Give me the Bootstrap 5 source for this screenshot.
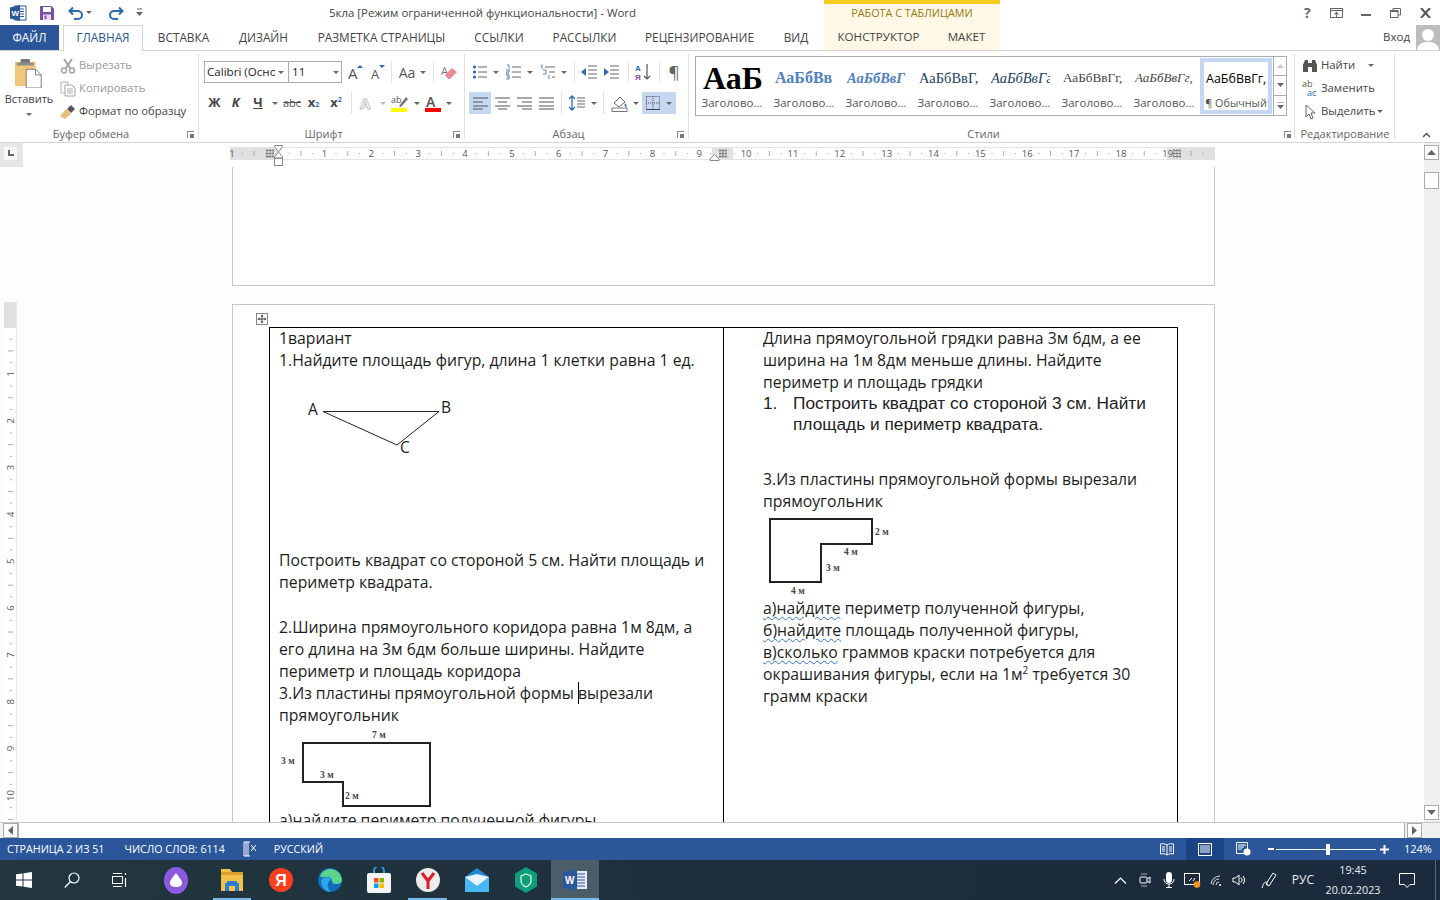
<!DOCTYPE html>
<html lang="ru">
  <head>
    <meta charset="UTF-8" />
    <meta name="viewport" content="width=device-width, initial-scale=1.0" />
    <title>5кла - Word</title>
    <link href="https://cdn.jsdelivr.net/npm/bootstrap@5.3.3/dist/css/bootstrap.min.css" rel="stylesheet" />
    <style>
      body { font-family: "Open Sans", "Noto Sans", sans-serif; font-size: 12px; color: #444; background: #fff; height: 900px; overflow: hidden; }
      svg { display: block; flex: none; }
      .ml1 { margin-left: 1px; } .ml2 { margin-left: 2px; } .ml3 { margin-left: 3px; } .ml4 { margin-left: 4px; }
      .ml5 { margin-left: 5px; } .ml6 { margin-left: 6px; } .ml12 { margin-left: 12px; } .ml13 { margin-left: 13px; } .ml14 { margin-left: 14px; }
      .mr3 { margin-right: 3px; } .mr4 { margin-right: 4px; } .mr5 { margin-right: 5px; }

      /* title bar + tabs */
      .ttl-bar { height: 25px; }
      .qat { width: 329px; padding-left: 10px; }
      .qat .cr { width: 10px; }
      .ttl-text { width: 495px; padding-top: 1px; color: #444; font-size: 11.45px; }
      .ctx-head { width: 176px; height: 25px; background: #fff8e6; border-top: 4px solid #f6cb1e; color: #97780f; font-size: 10.8px; text-align: center; line-height: 18px; }
      .win-ctl { width: 29.5px; display: flex; justify-content: center; }
      .win-help { font-size: 14px; color: #666; font-weight: 700; }
      .tab-row { height: 25px; }
      .tab-item { height: 25px; line-height: 24px; text-align: center; color: #444; font-size: 11.8px; text-decoration: none; flex: none; white-space: nowrap; }
      .tab-file { width: 59px; margin-right: 4px; background: #2b579a; color: #fff; }
      .tab-home { width: 80px; color: #2b579a; background: #fff; border: 1px solid #d4d4d4; border-bottom: 0; height: 26px; line-height: 23px; position: relative; z-index: 2; }
      .w-81 { width: 81px; } .w-79 { width: 79px; } .w-157 { width: 157px; } .w-78 { width: 78px; }
      .w-93 { width: 93px; } .w-137 { width: 137px; } .w-56 { width: 56px; }
      .tab-ctx { background: #fff8e6; font-size: 11.6px; }
      .w-109 { width: 109px; } .w-67 { width: 67px; }
      .login-txt { margin: -2px 6px 0 auto; color: #444; font-size: 11.5px; }
      .avatar { width: 24px; height: 25px; background: #bdbdbd; overflow: hidden; }

      /* ribbon */
      .rb { height: 93px; border-top: 1px solid #d4d4d4; border-bottom: 1px solid #d4d4d4; }
      .rb-grp { position: relative; flex: none; height: 91px; display: flex; flex-direction: column; }
      .rb-grp::after { content: ""; position: absolute; right: 0; top: 3px; bottom: 3px; width: 1px; background: #e1e1e1; }
      .rb-body { flex: 1; min-height: 0; }
      .rb-lbl { height: 16px; text-align: center; color: #666; font-size: 11px; line-height: 15px; padding-right: 17px; }
      .rb-lbl-full { padding-right: 0; }
      .launch { position: absolute; right: 5px; bottom: 4px; width: 7px; height: 7px; border: 1px solid #888; border-width: 1px 0 0 1px; }
      .launch::after { content: ""; position: absolute; right: 0; bottom: 0; width: 4px; height: 4px; background: #777; }
      .g-clip { width: 199px; } .g-font { width: 266px; } .g-para { width: 224px; } .g-style { width: 606px; } .g-edit { width: 100px; }
      .paste-col { width: 58px; padding-top: 7px; text-align: center; color: #444; font-size: 11px; }
      .paste-txt { margin-top: 3px; line-height: 16px; }
      .paste-col .cr { height: 14px; }
      .clip-list { padding: 3px 0 0 2px; }
      .clip-row { height: 23px; gap: 3px; color: #444; font-size: 11.3px; white-space: nowrap; }
      .is-off { color: #9a9a9a; }
      .pad-font { padding: 10px 0 0 5px; }
      .pad-para { padding: 10px 0 0 4px; }
      .tb-row { height: 22px; }
      .tb-next { margin-top: 9px; }
      .tb { width: 22px; height: 22px; flex: none; display: flex; align-items: center; justify-content: center; }
      .tb-21 { width: 21px; }
      .tb-on { background: #c5d7f1; }
      .tb-bold { font-size: 13px; font-weight: 700; color: #444; }
      .tb-case { font-size: 14px; color: #555; }
      .tb-strike { font-size: 11px; color: #555; text-decoration: line-through; }
      .tb-pil { font-size: 17px; color: #666; }
      .tb-bold sub, .tb-bold sup { font-size: 7px; color: #2b6cb0; }
      .cr { width: 10px; height: 22px; flex: none; display: flex; align-items: center; justify-content: center; }
      .cr::after { content: ""; border: 3px solid transparent; border-top-color: #666; border-bottom: 0; }
      .cr-11 { width: 11px; } .cr-12 { width: 12px; }
      .cr-dim { opacity: .45; }
      .vsep { width: 1px; height: 22px; background: #e1e1e1; flex: none; }
      .fnt-box { width: 138px; height: 22px; border: 1px solid #ababab; color: #222; }
      .fnt-name { width: 84px; padding-left: 2px; border-right: 1px solid #ababab; line-height: 20px; white-space: nowrap; font-size: 11.6px; }
      .fnt-clip { width: 68px; overflow: hidden; }
      .fnt-size { flex: 1; padding-left: 3px; line-height: 20px; font-size: 11.6px; }
      .fnt-box .cr { height: 20px; }
      .bord-btn { width: 34px; height: 22px; }
      .gal { width: 592px; height: 60px; margin: 5px 0 0 6px; border: 1px solid #ababab; }
      .gal-item { width: 72px; height: 58px; flex: none; overflow: hidden; text-align: center; white-space: nowrap; }
      .gal-sel { border: 4px solid #c3d7f2; height: 56px; margin-top: 1px; }
      .gal-prev { height: 38px; width: 59px; margin-left: 7px; text-align: left; line-height: 42px; font-family: "Liberation Serif", serif; overflow: hidden; }
      .gp-1 { font-size: 32px; color: #000; font-weight: 700; }
      .gp-2 { font-size: 16px; color: #4f81bd; font-weight: 700; }
      .gp-3 { font-size: 14.5px; color: #4f81bd; font-weight: 700; font-style: italic; }
      .gp-4 { font-size: 14.5px; color: #243f60; }
      .gp-5 { font-size: 14.5px; color: #243f60; font-style: italic; }
      .gp-6 { font-size: 13.2px; color: #444; }
      .gp-7 { font-size: 13px; color: #444; font-style: italic; }
      .gp-8 { font-size: 12.5px; color: #000; font-family: "Open Sans", sans-serif; height: 33px; width: 60px; margin-left: 2px; line-height: 33px; }
      .gal-name { color: #555; font-size: 11.5px; line-height: 15px; }
      .gal-sel .gal-name { font-size: 10.8px; }
      .gal-btns { width: 14px; margin-left: 1px; border-left: 1px solid #ababab; flex-grow: 1; }
      .gal-btns > div { height: 19.3px; border-bottom: 1px solid #ababab; display: flex; align-items: center; justify-content: center; }
      .gal-btns > div:last-child { border: 0; }
      .launch-st { right: 4px; }
      .edit-list { padding-top: 3px; }
      .edit-row { height: 23px; gap: 3px; color: #444; font-size: 11.3px; padding-left: 7px; white-space: nowrap; }
      .edit-sel { padding-left: 9px; }
      .edit-sel .cr { margin-left: -3px; }
      .rb-end { flex-grow: 1; position: relative; }
      .rb-fold { position: absolute; right: 9px; bottom: 4px; }

      /* ruler + page */
      .work { height: 679px; }
      .work-main { width: 1424px; }
      .rul-row { height: 24px; }
      .rul-sel { width: 23px; height: 24px; background: #e6e6e6; padding: 4px 4px 6px 4px; }
      .rul-sel > div { background: #f8f8f8; width: 13px; height: 13px; position: relative; }
      .rul-sel > div::after { content: ""; position: absolute; left: 4px; top: 3px; width: 6px; height: 6px; border: 2px solid #666; border-width: 0 0 2px 2px; }
      .doc-row { height: 655px; background: #fdfdfd; overflow: hidden; }
      .v-rul { width: 23px; padding-top: 135px; }
      .doc-pages { margin-left: 209px; width: 983px; position: relative; }
      .pg-tail { height: 119px; border: 1px solid #c6c6c6; border-top: 0; background: #fff; margin-bottom: 18px; }
      .pg { border: 1px solid #c6c6c6; border-bottom: 0; background: #fff; padding: 22px 0 0 36px; height: 900px; }
      .move-h { position: absolute; left: 24px; top: 146px; width: 12px; height: 12px; background: #fff; }
      .word-tbl { table-layout: fixed; width: 909px; border-collapse: collapse; color: #1d1d1d; font-size: 15.78px; line-height: 22px; }
      .word-tbl td { border: 1px solid #000; vertical-align: top; height: 620px; }
      .c-l { width: 454px; padding: 0 0 0 9px; }
      .c-r { width: 454px; padding: 0 0 0 39px; }
      .word-tbl p { margin: 0; white-space: nowrap; }
      .word-tbl td > p:first-child { margin-top: -1px; }
      .word-tbl .gap-23 { height: 23px; }
      .word-tbl .gap-33 { height: 33px; }
      .sq { text-decoration: underline wavy #2f6fd0 1px; text-underline-offset: 2px; }
      .caret-mark { border-left: 1px solid #000; margin-right: -1px; }
      .li-arial { font-family: "Liberation Sans", sans-serif; font-size: 17.3px; line-height: 21px; color: #222; white-space: nowrap; }
      .li-num { width: 30px; flex: none; }
      .sup-2 { font-size: 10px; line-height: 0; position: relative; top: -6px; vertical-align: baseline; }
      .fig-lbl { font-family: "Liberation Serif", serif; font-size: 9.5px; font-weight: 700; fill: #444; }
      .tri-lbl { font-family: "Open Sans", sans-serif; font-size: 15.5px; fill: #1d1d1d; }

      /* scrollbars */
      .v-scroll { width: 16px; background: #f0f0f0; padding-top: 2px; margin-left: auto; }
      .sb-btn { width: 15px; height: 15px; border: 1px solid #ababab; background: #fff; display: flex; align-items: center; justify-content: center; flex: none; }
      .sb-thumb { width: 15px; height: 17px; margin-top: 12px; border: 1px solid #ababab; background: #fff; }
      .sb-down { margin-top: auto; margin-bottom: 2px; }
      .h-scroll { height: 16px; border-top: 1px solid #c6c6c6; background: #f0f0f0; padding: 0 18px 0 3px; }
      .h-track { flex: 1; background: #fff; border: 1px solid #ababab; border-width: 0 1px; height: 15px; margin: 0 2px 0 0; }

      /* status bar */
      .st-bar { height: 22px; background: #2b579a; color: #fff; font-size: 10.7px; line-height: 22px; padding-left: 7px; white-space: nowrap; }
      .st-words { margin-left: 20px; }
      .st-proof { margin-left: 18px; align-self: center; }
      .st-lang { margin-left: 17px; }
      .st-right { width: 292px; margin-left: auto; }
      .st-view { width: 38px; height: 22px; display: flex; align-items: center; justify-content: center; }
      .st-on { background: #1b4484; }
      .zoom-minus { margin-left: 6px; }
      .zoom-line { width: 100px; height: 1px; background: #fff; position: relative; margin: 0 4px 0 1px; }
      .zoom-thumb { position: absolute; left: 50px; top: -5px; width: 4px; height: 11px; background: #fff; }
      .zoom-val { margin-left: 15px; font-size: 11px; }

      /* taskbar */
      .task { height: 40px; background: linear-gradient(90deg, #22373f, #1c2d3d 60%, #1b2a3c); color: #fff; }
      .tk { width: 48px; height: 40px; flex: none; display: flex; align-items: center; justify-content: center; position: relative; }
      .tk-49 { width: 49px; }
      .tk-gap { margin-left: 8px; }
      .tk-run::after { content: ""; position: absolute; left: 5px; right: 5px; bottom: 0; height: 2px; background: #76b9ed; }
      .tk-act { background: #4b5e68; margin-left: 1px; }
      .tk-act::after { left: 0; right: 0; }
      .tray { margin-left: auto; }
      .tray-ic { width: 24px; display: flex; justify-content: center; flex: none; }
      .tray-22 { width: 22px; }
      .tray-pen { margin-left: 6px; }
      .tray-lang { margin-left: 11px; color: #e8edf0; font-size: 12px; }
      .clock { width: 70px; margin-left: 4px; text-align: center; line-height: 20px; font-size: 10.8px; color: #e8edf0; }
      .notif { width: 38px; margin: 0 5px 0 0; display: flex; justify-content: center; }
      .desk-edge { width: 1px; height: 40px; background: #5a6a76; margin: 0 4px; }
    </style>
  </head>
  <body class="d-flex flex-column">

    <div class="ttl-bar d-flex align-items-center">
      <div class="qat d-flex align-items-center">
        <svg width="17" height="16" viewBox="0 0 17 16"><rect x="5" y="1" width="11" height="14" fill="#fff" stroke="#2b579a"/><path d="M8 4h6M8 6.500h6M8 9h6M8 11.500h6" stroke="#2b579a"/><path d="M0 2.500 10 0v16L0 13.500z" fill="#2b579a"/><text x="1.500" y="11" font-family="Liberation Sans" font-size="8" font-weight="700" fill="#fff">W</text></svg>
        <svg class="ml13" width="14" height="14" viewBox="0 0 14 14"><path d="M0 0h11.500L14 2.500V14H0z" fill="#7b4ea3"/><rect x="3" y="1" width="8" height="5" fill="#fff"/><rect x="3" y="8.500" width="8" height="5.500" fill="#e4dbed"/><rect x="4.500" y="9.500" width="2" height="3.500" fill="#7b4ea3"/></svg>
        <svg class="ml14" width="16" height="14" viewBox="0 0 16 14"><path d="M5 1.500 1.500 5 5 8.500M2 5h8a4 4 0 0 1 0 8H6" fill="none" stroke="#2b6cb0" stroke-width="2"/></svg>
        <div class="cr"></div>
        <svg class="ml14" width="16" height="14" viewBox="0 0 16 14"><path d="M11 1.500 14.500 5 11 8.500M14 5H6a4 4 0 0 0 0 8h4" fill="none" stroke="#2b6cb0" stroke-width="2"/></svg>
        <svg class="ml12" width="7" height="9" viewBox="0 0 7 9"><path d="M1 1h5" stroke="#666"/><path d="M0 4h7L3.500 8z" fill="#666"/></svg>
      </div>
      <div class="ttl-text">5кла [Режим ограниченной функциональности] - Word</div>
      <div class="ctx-head align-self-start">РАБОТА С ТАБЛИЦАМИ</div>
      <div class="d-flex align-items-center ms-auto">
        <div class="win-ctl win-help">?</div>
        <div class="win-ctl"><svg width="13" height="10" viewBox="0 0 13 10"><rect x=".5" y=".5" width="12" height="9" fill="none" stroke="#666"/><path d="M.5 2.500h12" stroke="#666"/><path d="M6.500 3.500 4 6.500h5zM6 6h1v3H6z" fill="#666"/></svg></div>
        <div class="win-ctl"><svg width="10" height="10" viewBox="0 0 10 10"><rect y="6" width="10" height="2" fill="#666"/></svg></div>
        <div class="win-ctl"><svg width="11" height="10" viewBox="0 0 11 10"><path d="M3 2V.5h7.500V7H8" fill="none" stroke="#666"/><rect x=".5" y="2.500" width="7.500" height="7" fill="#fff" stroke="#666"/><path d="M.5 3h7.500" stroke="#666" stroke-width="2"/></svg></div>
        <div class="win-ctl"><svg width="11" height="10" viewBox="0 0 11 10"><path d="M1 0l9 10M10 0 1 10" stroke="#555" stroke-width="2"/></svg></div>
      </div>
    </div>

    <div class="tab-row d-flex">
      <a class="tab-item tab-file">ФАЙЛ</a>
      <a class="tab-item tab-home">ГЛАВНАЯ</a>
      <a class="tab-item w-81">ВСТАВКА</a>
      <a class="tab-item w-79">ДИЗАЙН</a>
      <a class="tab-item w-157">РАЗМЕТКА СТРАНИЦЫ</a>
      <a class="tab-item w-78">ССЫЛКИ</a>
      <a class="tab-item w-93">РАССЫЛКИ</a>
      <a class="tab-item w-137">РЕЦЕНЗИРОВАНИЕ</a>
      <a class="tab-item w-56">ВИД</a>
      <a class="tab-item tab-ctx w-109">КОНСТРУКТОР</a>
      <a class="tab-item tab-ctx w-67">МАКЕТ</a>
      <div class="login-txt align-self-center">Вход</div>
      <div class="avatar"><svg width="24" height="25" viewBox="0 0 24 25"><circle cx="12" cy="10" r="6" fill="#fff"/><path d="M1 25c1-7 6-8 11-8s10 1 11 8z" fill="#fff"/></svg></div>
    </div>

    <div class="rb d-flex">
      <div class="rb-grp g-clip">
        <div class="rb-body d-flex">
          <div class="paste-col">
            <svg class="mx-auto" width="30" height="30" viewBox="0 0 32 32"><rect x="1" y="4" width="22" height="26" fill="#f0c77b"/><rect x="7" y="1" width="10" height="6" rx="1" fill="#777"/><rect x="3" y="5" width="18" height="3" fill="#8c8c8c"/><path d="M13 12h10l6 6v14H13z" fill="#fff" stroke="#777"/><path d="M23 12v6h6" fill="none" stroke="#777"/></svg>
            <div class="paste-txt">Вставить</div>
            <div class="cr mx-auto"></div>
          </div>
          <div class="clip-list">
            <div class="clip-row d-flex align-items-center is-off"><svg width="16" height="16" viewBox="0 0 16 16"><path d="M4 1l6 9M12 1 6 10" stroke="#a3a3a3" stroke-width="2"/><circle cx="4" cy="12.500" r="2.500" fill="none" stroke="#a3a3a3" stroke-width="1.400"/><circle cx="12" cy="12.500" r="2.500" fill="none" stroke="#a3a3a3" stroke-width="1.400"/></svg>Вырезать</div>
            <div class="clip-row d-flex align-items-center is-off"><svg width="16" height="16" viewBox="0 0 16 16"><path d="M1 1h7v11H1z" fill="#fff" stroke="#b0b0b0"/><path d="M5 4h7l3 3v8H5z" fill="#fff" stroke="#a3a3a3"/><path d="M7 8h6M7 10h6M7 12h6" stroke="#b0b0b0"/></svg>Копировать</div>
            <div class="clip-row d-flex align-items-center"><svg width="16" height="16" viewBox="0 0 16 16"><path d="M0 12 6 5l5 5-6 5z" fill="#e6bd77"/><path d="m7 5 4-4 4 4-4 4z" fill="#555"/></svg>Формат по образцу</div>
          </div>
        </div>
        <div class="rb-lbl">Буфер обмена</div><div class="launch"></div>
      </div>

      <div class="rb-grp g-font">
        <div class="rb-body pad-font">
          <div class="tb-row d-flex align-items-center">
            <div class="fnt-box d-flex">
              <div class="fnt-name d-flex"><span class="fnt-clip">Calibri (Осно</span><div class="cr cr-12"></div></div>
              <div class="fnt-size d-flex justify-content-between"><span>11</span><div class="cr"></div></div>
            </div>
            <div class="tb ml2"><svg width="20" height="18" viewBox="0 0 20 18"><text x="3" y="16" font-family="Open Sans" font-size="15" fill="#555">A</text><path d="m15 2 3 3h-6z" fill="#2b6cb0"/></svg></div>
            <div class="tb"><svg width="20" height="18" viewBox="0 0 20 18"><text x="4" y="16" font-family="Open Sans" font-size="13" fill="#555">A</text><path d="m15 5 3-3h-6z" fill="#2b6cb0"/></svg></div>
            <div class="vsep ml3 mr4"></div>
            <div class="tb tb-case">Aa</div><div class="cr"></div>
            <div class="vsep ml5 mr4"></div>
            <div class="tb"><svg width="18" height="17" viewBox="0 0 18 17"><text x="1" y="11" font-family="Open Sans" font-size="11" fill="#777">A</text><path d="m5 11 7-7 5 4-7 7H8z" fill="#e98a92"/></svg></div>
          </div>
          <div class="tb-row tb-next d-flex align-items-center">
            <div class="tb tb-21 tb-bold">Ж</div>
            <div class="tb tb-21 tb-bold fst-italic">К</div>
            <div class="tb tb-bold text-decoration-underline ml1">Ч</div><div class="cr cr-12"></div>
            <div class="tb tb-strike">abc</div>
            <div class="tb tb-21 tb-bold">x<sub>2</sub></div>
            <div class="tb tb-bold ml1">x<sup>2</sup></div>
            <div class="vsep ml4 mr4"></div>
            <div class="tb"><svg width="18" height="18" viewBox="0 0 18 18"><text x="2" y="15" font-family="Open Sans" font-size="15" font-weight="700" fill="#fff" stroke="#bdbdbd" stroke-width=".8">A</text></svg></div><div class="cr cr-dim"></div>
            <div class="tb ml1"><svg width="18" height="18" viewBox="0 0 18 18"><text x="0" y="9" font-family="Open Sans" font-size="9" fill="#555">ab</text><path d="m8 12 7-9 2 2-7 8z" fill="#777"/><rect y="14" width="16" height="4" fill="#ffff00"/></svg></div><div class="cr cr-11"></div>
            <div class="tb"><svg width="18" height="18" viewBox="0 0 18 18"><text x="2" y="13" font-family="Open Sans" font-size="14" font-weight="600" fill="#555">A</text><rect x="1" y="14" width="16" height="4" fill="#ff0000"/></svg></div><div class="cr"></div>
          </div>
        </div>
        <div class="rb-lbl">Шрифт</div><div class="launch"></div>
      </div>

      <div class="rb-grp g-para">
        <div class="rb-body pad-para">
          <div class="tb-row d-flex align-items-center">
            <div class="tb"><svg width="16" height="16" viewBox="0 0 16 16"><g fill="#2b6cb0"><circle cx="2.500" cy="3" r="1.600"/><circle cx="2.500" cy="8" r="1.600"/><circle cx="2.500" cy="13" r="1.600"/></g><path d="M6 3h9M6 8h9M6 13h9" stroke="#666"/></svg></div><div class="cr"></div>
            <div class="tb ml2"><svg width="16" height="16" viewBox="0 0 16 16"><path d="M1 1h2v4M0 6h3v2H0v2h3M0 11h3v2H1M3 13v2H0" fill="none" stroke="#2b6cb0" stroke-width=".8"/><path d="M6 3h9M6 8h9M6 13h9" stroke="#666"/></svg></div><div class="cr"></div>
            <div class="tb ml2"><svg width="16" height="16" viewBox="0 0 16 16"><path d="M1 1h1v4M3 6h3v4H3M9 11v4" fill="none" stroke="#2b6cb0" stroke-width=".8"/><path d="M5 3h10M9 8h6M12 13h3" stroke="#666"/></svg></div><div class="cr"></div>
            <div class="vsep ml5 mr3"></div>
            <div class="tb"><svg width="16" height="14" viewBox="0 0 16 14"><path d="M7 1h9M7 5h9M7 9h9M7 13h9" stroke="#666"/><path d="M0 7l5-4v8z" fill="#2b6cb0"/></svg></div>
            <div class="tb"><svg width="16" height="14" viewBox="0 0 16 14"><path d="M7 1h9M7 5h9M7 9h9M7 13h9" stroke="#666"/><path d="M6 7 1 3v8z" fill="#2b6cb0"/></svg></div>
            <div class="vsep ml6 mr4"></div>
            <div class="tb"><svg width="18" height="18" viewBox="0 0 18 18"><g font-family="Liberation Sans" font-size="8" font-weight="700"><text x="0" y="8" fill="#2b6cb0">А</text><text x="0" y="17" fill="#7b4ea3">Я</text></g><path d="M12 1v15M9 13l3 3 3-3" fill="none" stroke="#555" stroke-width="1.200"/></svg></div>
            <div class="vsep ml4 mr3"></div>
            <div class="tb tb-pil">¶</div>
          </div>
          <div class="tb-row tb-next d-flex align-items-center">
            <div class="tb tb-on"><svg width="15" height="13" viewBox="0 0 15 13"><path d="M0 1h15M0 5h10M0 9h15M0 12h10" stroke="#555"/></svg></div>
            <div class="tb"><svg width="15" height="13" viewBox="0 0 15 13"><path d="M0 1h15M3 5h9M0 9h15M3 12h9" stroke="#555"/></svg></div>
            <div class="tb"><svg width="15" height="13" viewBox="0 0 15 13"><path d="M0 1h15M5 5h10M0 9h15M5 12h10" stroke="#555"/></svg></div>
            <div class="tb"><svg width="15" height="13" viewBox="0 0 15 13"><path d="M0 1h15M0 5h15M0 9h15M0 12h15" stroke="#555"/></svg></div>
            <div class="vsep ml4 mr4"></div>
            <div class="tb"><svg width="16" height="16" viewBox="0 0 16 16"><path d="M3 1v14M0 4l3-3 3 3M0 12l3 3 3-3" fill="none" stroke="#2b6cb0" stroke-width="1.300"/><path d="M8 3h8M8 6h8M8 9h8M8 12h8" stroke="#666"/></svg></div><div class="cr cr-12"></div>
            <div class="vsep ml3 mr5"></div>
            <div class="tb"><svg width="18" height="18" viewBox="0 0 18 18"><path d="M3 9l6-6 5 5-6 5z" fill="#fff" stroke="#666"/><path d="M14 9c2 2 2 4 1 4s-2-2-1-4" fill="#2b6cb0"/><rect x="1" y="14" width="15" height="3.500" fill="#fff" stroke="#777"/></svg></div><div class="cr"></div>
            <div class="d-flex tb-on align-items-center bord-btn ml1"><div class="tb"><svg width="14" height="14" viewBox="0 0 14 14"><path d="M.5.500h13v13M.5.500v13h13M7 0v14M0 7h14" fill="none" stroke="#555" stroke-dasharray="1 1"/><path d="M0 13.500h14" stroke="#444"/></svg></div><div class="cr"></div></div>
          </div>
        </div>
        <div class="rb-lbl">Абзац</div><div class="launch"></div>
      </div>

      <div class="rb-grp g-style">
        <div class="rb-body">
          <div class="gal d-flex">
            <div class="gal-item"><div class="gal-prev gp-1">АаБ</div><div class="gal-name">Заголово...</div></div>
            <div class="gal-item"><div class="gal-prev gp-2">АаБбВв</div><div class="gal-name">Заголово...</div></div>
            <div class="gal-item"><div class="gal-prev gp-3">АаБбВвГ</div><div class="gal-name">Заголово...</div></div>
            <div class="gal-item"><div class="gal-prev gp-4">АаБбВвГ,</div><div class="gal-name">Заголово...</div></div>
            <div class="gal-item"><div class="gal-prev gp-5">АаБбВвГг</div><div class="gal-name">Заголово...</div></div>
            <div class="gal-item"><div class="gal-prev gp-6">АаБбВвГг,</div><div class="gal-name">Заголово...</div></div>
            <div class="gal-item"><div class="gal-prev gp-7">АаБбВвГг,</div><div class="gal-name">Заголово...</div></div>
            <div class="gal-item gal-sel"><div class="gal-prev gp-8">АаБбВвГг,</div><div class="gal-name">¶ Обычный</div></div>
            <div class="gal-btns">
              <div><svg width="7" height="4" viewBox="0 0 7 4"><path d="M3.500 0 7 4H0z" fill="#ccc"/></svg></div>
              <div><svg width="7" height="4" viewBox="0 0 7 4"><path d="M3.500 4 7 0H0z" fill="#666"/></svg></div>
              <div><svg width="7" height="7" viewBox="0 0 7 7"><path d="M0 0h7" stroke="#666"/><path d="M3.500 7 7 3H0z" fill="#666"/></svg></div>
            </div>
          </div>
        </div>
        <div class="rb-lbl">Стили</div><div class="launch launch-st"></div>
      </div>

      <div class="rb-grp g-edit">
        <div class="rb-body edit-list">
          <div class="edit-row d-flex align-items-center"><svg width="16" height="14" viewBox="0 0 16 14"><path d="M1 6 3 1h3v12H1zM15 6l-2-5h-3v12h5zM6 4h4v4H6z" fill="#555"/></svg>Найти<div class="cr ms-2"></div></div>
          <div class="edit-row d-flex align-items-center"><svg width="16" height="17" viewBox="0 0 16 17"><g font-family="Open Sans" font-size="9"><text x="0" y="7" fill="#555">ab</text><text x="5" y="16" fill="#2b6cb0">ac</text></g></svg>Заменить</div>
          <div class="edit-row edit-sel d-flex align-items-center"><svg width="14" height="16" viewBox="0 0 14 16"><path d="M2 1v12l3-3 2 5 2-1-2-5h4z" fill="#fff" stroke="#666"/></svg>Выделить<div class="cr"></div></div>
        </div>
        <div class="rb-lbl rb-lbl-full">Редактирование</div>
      </div>

      <div class="rb-end">
        <svg class="rb-fold" width="9" height="6" viewBox="0 0 9 6"><path d="m1 5 3.500-3.500L8 5" fill="none" stroke="#555" stroke-width="1.500"/></svg>
      </div>
    </div>

    <div class="work d-flex">
      <div class="work-main d-flex flex-column">
        <div class="rul-row d-flex">
          <div class="rul-sel"><div></div></div>
          <svg id="hruler" width="1401" height="24" viewBox="23 143 1401 24"></svg>
        </div>
        <div class="doc-row d-flex">
          <div class="v-rul"><svg id="vruler" width="23" height="520" viewBox="0 302 23 520"></svg></div>
          <div class="doc-pages">
            <div class="pg-tail"></div>
            <div class="pg">
              <table class="word-tbl">
                <tr>
                  <td class="c-l">
                    <p>1вариант</p>
                    <p>1.Найдите площадь фигур, длина 1 клетки равна 1 ед.</p>
                    <svg width="444" height="178" viewBox="279 371 444 178">
                      <path d="M323 411.500h116M323 411.500l74 33.500 42-33.500" fill="none" stroke="#222"/>
                      <g class="tri-lbl"><text x="308" y="415">A</text><text x="441" y="413">B</text><text x="400" y="453">C</text></g>
                    </svg>
                    <p>Построить квадрат со стороной 5 см. Найти площадь и</p>
                    <p>периметр квадрата.</p>
                    <p class="gap-23"></p>
                    <p>2.Ширина прямоугольного коридора равна 1м 8дм, а</p>
                    <p>его длина на 3м 6дм больше ширины. Найдите</p>
                    <p>периметр и площадь коридора</p>
                    <p>3.Из пластины прямоугольной формы <span class="caret-mark"></span>вырезали</p>
                    <p>прямоугольник</p>
                    <svg width="444" height="83" viewBox="279 726 444 83">
                      <path d="M303 743h127v63h-87v-24h-40z" fill="none" stroke="#222" stroke-width="2"/>
                      <g class="fig-lbl"><text x="372" y="738">7 м</text><text x="281" y="764">3 м</text><text x="320" y="778">3 м</text><text x="345" y="799">2 м</text></g>
                    </svg>
                    <p>а)найдите периметр полученной фигуры,</p>
                  </td>
                  <td class="c-r">
                    <p>Длина прямоугольной грядки равна 3м 6дм, а ее</p>
                    <p>ширина на 1м 8дм меньше длины. Найдите</p>
                    <p>периметр и площадь грядки</p>
                    <div class="li-arial d-flex"><div class="li-num">1.</div><div>Построить квадрат со стороной 3 см. Найти<br>площадь и периметр квадрата.</div></div>
                    <p class="gap-33"></p>
                    <p>3.Из пластины прямоугольной формы вырезали</p>
                    <p>прямоугольник</p>
                    <svg width="410" height="85" viewBox="763 512 410 85">
                      <path d="M770 519h102v25h-51v38h-51z" fill="none" stroke="#222" stroke-width="2"/>
                      <g class="fig-lbl"><text x="875" y="535">2 м</text><text x="844" y="555">4 м</text><text x="826" y="571">3 м</text><text x="791" y="594">4 м</text></g>
                    </svg>
                    <p><span class="sq">а)найдите</span> периметр полученной фигуры,</p>
                    <p><span class="sq">б)найдите</span> площадь полученной фигуры,</p>
                    <p><span class="sq">в)сколько</span> граммов краски потребуется для</p>
                    <p>окрашивания фигуры, если на 1м<span class="sup-2">2</span> требуется 30</p>
                    <p>грамм краски</p>
                  </td>
                </tr>
              </table>
            </div>
            <div class="move-h"><svg width="12" height="12" viewBox="0 0 12 12"><rect x=".5" y=".5" width="11" height="11" fill="#fff" stroke="#888"/><path d="M6 2v8M2 6h8" stroke="#444"/><path d="M6 1.500 4.500 3.500h3zM6 10.500l-1.500-2h3zM1.500 6l2-1.500v3zM10.500 6l-2-1.500v3z" fill="#444"/></svg></div>
          </div>
        </div>
      </div>
      <div class="v-scroll d-flex flex-column">
        <div class="sb-btn"><svg width="9" height="5" viewBox="0 0 9 5"><path d="M4.500 0 9 5H0z" fill="#666"/></svg></div>
        <div class="sb-thumb"></div>
        <div class="sb-btn sb-down"><svg width="9" height="5" viewBox="0 0 9 5"><path d="M4.500 5 9 0H0z" fill="#666"/></svg></div>
      </div>
    </div>

    <div class="h-scroll d-flex">
      <div class="sb-btn"><svg width="5" height="9" viewBox="0 0 5 9"><path d="M0 4.500 5 0v9z" fill="#666"/></svg></div>
      <div class="h-track"></div>
      <div class="sb-btn"><svg width="5" height="9" viewBox="0 0 5 9"><path d="M5 4.500 0 0v9z" fill="#666"/></svg></div>
    </div>

    <div class="st-bar d-flex">
      <span>СТРАНИЦА 2 ИЗ 51</span>
      <span class="st-words">ЧИСЛО СЛОВ: 6114</span>
      <svg class="st-proof" width="14" height="16" viewBox="0 0 14 16"><path d="M1 1h4v14H1zM3 1v14" fill="none" stroke="#fff"/><path d="M5 1h2M5 15h2M8 4l5 6M13 4l-5 6" stroke="#fff"/></svg>
      <span class="st-lang">РУССКИЙ</span>
      <div class="st-right d-flex align-items-center">
        <div class="st-view"><svg width="14" height="13" viewBox="0 0 14 13"><path d="M7 2C5 .5 2 .5 .5 1v10c2-.5 4.500-.5 6.500 1 2-1.500 4.500-1.500 6.500-1V1C12 .5 9 .5 7 2zM7 2v10M2 4h3M2 6h3M2 8h3M9 4h3M9 6h3M9 8h3" fill="none" stroke="#fff"/></svg></div>
        <div class="st-view st-on"><svg width="14" height="13" viewBox="0 0 14 13"><rect x=".5" y=".5" width="13" height="12" fill="none" stroke="#fff"/><path d="M2 3h10M2 5h10M2 7h10M2 9h10" stroke="#fff"/></svg></div>
        <div class="st-view"><svg width="15" height="14" viewBox="0 0 15 14"><path d="M.5.500h11v11H.5z" fill="none" stroke="#fff"/><path d="M2 3h8M2 5h6M2 7h4" stroke="#fff"/><circle cx="11" cy="10" r="3.500" fill="#fff"/></svg></div>
        <svg class="zoom-minus" width="7" height="7" viewBox="0 0 7 7"><rect y="2" width="6" height="2" fill="#fff"/></svg>
        <div class="zoom-line"><div class="zoom-thumb"></div></div>
        <svg width="9" height="9" viewBox="0 0 9 9"><path d="M4.500 0v9M0 4.500h9" stroke="#fff" stroke-width="2"/></svg>
        <span class="zoom-val">124%</span>
      </div>
    </div>

    <div class="task d-flex align-items-center">
      <div class="tk"><svg width="16" height="16" viewBox="0 0 16 16"><path d="M0 2.300 6.500 1.400V7.500H0zM7.500 1.200 16 0v7.500H7.500zM0 8.500h6.500v6.100L0 13.700zM7.500 8.500H16V16l-8.500-1.200z" fill="#fff"/></svg></div>
      <div class="tk"><svg width="16" height="16" viewBox="0 0 16 16"><circle cx="10" cy="6" r="5" fill="none" stroke="#fff" stroke-width="1.200"/><path d="M6.500 9.500 .8 15.500" stroke="#fff" stroke-width="1.300"/></svg></div>
      <div class="tk"><svg width="16" height="16" viewBox="0 0 16 16"><rect x=".5" y="4.500" width="10" height="7" fill="none" stroke="#fff"/><path d="M1 1.500h9M1 14.500h9M13.500 1v2M13.500 6v9" stroke="#fff" stroke-width="1.200"/></svg></div>
      <div class="tk tk-gap"><svg width="24" height="27" viewBox="0 0 24 27"><ellipse cx="12" cy="13.500" rx="12" ry="13.500" fill="#8b5ae0"/><path d="M12 6c3 4 6 7 6 10 0 3-3 4-6 4s-6-1-6-4c0-3 3-6 6-10z" fill="#fff"/></svg></div>
      <div class="tk tk-run tk-gap"><svg width="22" height="24" viewBox="0 0 22 24"><path d="M0 1h9l2 3h11v19H0z" fill="#f3c14b"/><rect y="4" width="22" height="3" fill="#d9a02c"/><path d="M6 13h10v2h2v8h-4v-5H8v5H4v-8h2z" fill="#2d7fc9"/></svg></div>
      <div class="tk tk-49"><svg width="24" height="24" viewBox="0 0 24 24"><circle cx="12" cy="12" r="12" fill="#fc3f1d"/><text x="12" y="18" text-anchor="middle" font-family="Liberation Sans" font-size="16" font-weight="700" fill="#fff">Я</text></svg></div>
      <div class="tk tk-49"><svg width="24" height="24" viewBox="0 0 24 24"><circle cx="12" cy="12" r="12" fill="#0f6cbd"/><path d="M2 8C6-2 22-2 24 12c0 3-3 4-6 4-3 0-4-1-4-3 0-3-3-5-6-4-3 0-5 1-6-1z" fill="#5fd38e"/><path d="M3 13c0 6 5 11 10 11-3-2-4-6-3-9 1-2 3-3 3-5-4-2-9 0-10 3z" fill="#2ea8e8"/></svg></div>
      <div class="tk tk-49"><svg width="24" height="26" viewBox="0 0 24 26"><path d="M7 7V4a5 5 0 0 1 10 0v3" fill="none" stroke="#2b9ce6" stroke-width="2"/><rect y="6" width="24" height="20" rx="2" fill="#f4f4f4"/><rect x="7" y="11" width="4.500" height="4.500" fill="#f25022"/><rect x="12.500" y="11" width="4.500" height="4.500" fill="#7fba00"/><rect x="7" y="16.500" width="4.500" height="4.500" fill="#00a4ef"/><rect x="12.500" y="16.500" width="4.500" height="4.500" fill="#ffb900"/></svg></div>
      <div class="tk tk-49 tk-run"><svg width="24" height="24" viewBox="0 0 24 24"><circle cx="12" cy="12" r="12" fill="#ececec"/><path d="M6 5l6 8 6-8M12 13v8" fill="none" stroke="#e11d2a" stroke-width="3"/></svg></div>
      <div class="tk tk-49"><svg width="24" height="24" viewBox="0 0 24 24"><path d="M0 9 12 0l12 9v15H0z" fill="#1f8ad8"/><path d="M0 9l12 9 12-9v15H0z" fill="#45b8f2"/><path d="M0 9l12 9 12-9-12-3z" fill="#e8f5fd"/></svg></div>
      <div class="tk tk-49"><svg width="22" height="26" viewBox="0 0 22 26"><path d="M11 0 22 6.500v13L11 26 0 19.500v-13z" fill="#0f9d7a"/><path d="M11 7l5 2v5c0 3-3 5-5 6-2-1-5-3-5-6V9z" fill="none" stroke="#d9f3ea" stroke-width="1.300"/></svg></div>
      <div class="tk tk-act tk-run"><svg width="24" height="22" viewBox="0 0 24 22"><rect x="7" y="2" width="17" height="18" fill="#e8eef7"/><path d="M13 5h9M13 8h9M13 11h9M13 14h9M13 17h9" stroke="#2b579a"/><path d="M0 3 14 0v22L0 19z" fill="#2b579a"/><text x="2" y="15" font-family="Liberation Sans" font-size="10" font-weight="700" fill="#fff">W</text></svg></div>

      <div class="tray d-flex align-items-center">
        <div class="tray-ic"><svg width="13" height="7" viewBox="0 0 13 7"><path d="m1 6.500 5.500-5.500L12 6.500" fill="none" stroke="#fff" stroke-width="1.200"/></svg></div>
        <div class="tray-ic"><svg width="12" height="16" viewBox="0 0 12 16"><rect x="1" y="5" width="7" height="6" rx="1" fill="none" stroke="#fff"/><path d="m8 7 3-2v6L8 9" fill="none" stroke="#fff"/><path d="M2 2h6M2 14h6" stroke="#aaa"/></svg></div>
        <div class="tray-ic"><svg width="12" height="16" viewBox="0 0 12 16"><rect x="3" y="0" width="6" height="11" rx="3" fill="#fff"/><path d="M1 7c0 3 2 5 5 5s5-2 5-5M6 12v3M3 15.500h6" fill="none" stroke="#fff"/></svg></div>
        <div class="tray-ic"><svg width="17" height="16" viewBox="0 0 17 16"><rect x=".5" y="1.500" width="15" height="11" fill="none" stroke="#fff"/><path d="M5 9l3-3M9 9l2-3" stroke="#fff"/><circle cx="13" cy="12.500" r="3.300" fill="#f7931e"/></svg></div>
        <div class="tray-ic"><svg width="13" height="11" viewBox="0 0 13 11"><path d="M1 9a9 9 0 0 1 9-8M3 10a6 6 0 0 1 6-6M6 10a3 3 0 0 1 3-3" fill="none" stroke="#ddd"/><circle cx="10" cy="10" r="1" fill="#fff"/></svg></div>
        <div class="tray-ic tray-22"><svg width="16" height="12" viewBox="0 0 16 12"><path d="M1 4h2.500L7 1v10L3.500 8H1z" fill="none" stroke="#fff"/><path d="M9 3.500a3.500 3.500 0 0 1 0 5M11 2a6 6 0 0 1 0 8" fill="none" stroke="#fff"/></svg></div>
        <div class="tray-ic tray-pen"><svg width="16" height="17" viewBox="0 0 16 17"><path d="m5 12 7-11 3 2-7 11zM1 16c1-3 2-6 4-6s0 4 2 3" fill="none" stroke="#fff"/></svg></div>
        <div class="tray-lang">РУС</div>
        <div class="clock">19:45<br>20.02.2023</div>
        <div class="notif"><svg width="16" height="15" viewBox="0 0 16 15"><path d="M.5.500h15v11H11L8 14.500 5.500 11.500H.5z" fill="none" stroke="#fff"/></svg></div>
        <div class="desk-edge"></div>
      </div>
    </div>

    <script>
      // ruler ticks and numbers, page coordinates
      const cm = 46.85;
      const num = (x, y, t) => `<text x="${x}" y="${y}" text-anchor="middle" font-family="Open Sans" font-size="9.500" fill="#555">${t}</text>`;
      let h = `<path d="M230 147.500H1215M230 159.500H1215" stroke="#e4e4e4"/>
        <rect x="230" y="148" width="47" height="12" fill="#e0e0e0"/>
        <rect x="712" y="148" width="21" height="12" fill="#e0e0e0"/>
        <rect x="1167" y="148" width="48" height="12" fill="#e0e0e0"/>`;
      for (let x = 277 - 3 * cm / 4; x < 1215; x += cm / 4) {
        const i = Math.round((x - 277) / (cm / 4));
        if (i % 4 == 0) continue;
        h += i % 2 ? `<rect x="${x}" y="153" width="1" height="1" fill="#999"/>` : `<rect x="${x}" y="151" width="1" height="5" fill="#aaa"/>`;
      }
      for (let n = 1; n <= 19; n++) h += num(277.6 + n * cm, 157, n);
      h += num(232, 157, 1);
      [270, 723, 1177].forEach((x) => {
        h += `<path d="M${x - 4} 150.500h8M${x - 4} 153.500h8M${x - 4} 156.500h8M${x - 3} 149v9M${x} 149v9M${x + 3} 149v9" stroke="#777" stroke-width=".8"/>`;
      });
      h += `<path d="M274.500 145.500h8v1l-4 5.500-4-5.500zM278.500 152l4 5v1h-8v-1z" fill="#fff" stroke="#888"/>
        <rect x="274.500" y="158.500" width="8" height="7" fill="#fff" stroke="#888"/>
        <path d="M714.500 154.500l4.500 4.500v1.500h-9v-1.500z" fill="#fff" stroke="#888"/>`;
      document.getElementById("hruler").innerHTML = h;

      let v = `<rect x="4" y="302" width="13" height="520" fill="#fff"/>
        <rect x="4" y="302" width="13" height="26" fill="#e0e0e0"/>
        <path d="M16.500 302V822" stroke="#e8e8e8"/>`;
      for (let y = 327 + cm / 4; y < 822; y += cm / 4) {
        const i = Math.round((y - 327) / (cm / 4));
        if (i % 4 == 0) continue;
        v += i % 2 ? `<rect x="10" y="${y}" width="2" height="1" fill="#aaa"/>` : `<rect x="8" y="${y}" width="5" height="1" fill="#aaa"/>`;
      }
      for (let n = 1; n <= 10; n++) {
        const y = 327 + n * cm;
        v += `<text transform="translate(14 ${y}) rotate(-90)" text-anchor="middle" font-family="Open Sans" font-size="9.500" fill="#555">${n}</text>`;
      }
      document.getElementById("vruler").innerHTML = v;
    </script>
    <script src="https://cdn.jsdelivr.net/npm/bootstrap@5.3.3/dist/js/bootstrap.bundle.min.js"></script>
  </body>
</html>
